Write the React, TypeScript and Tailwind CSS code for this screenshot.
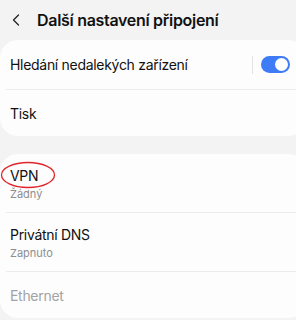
import { ChevronLeft } from "lucide-react";

function Toggle() {
    return (
        <div className="flex items-center gap-2">
            <div className="w-px h-[18px] bg-[#e3e3e3]"></div>
            <div className="w-[29px] h-[17px] rounded-full bg-[#3e7bf6] flex items-center justify-end pr-[2px]">
                <div className="w-[13px] h-[13px] rounded-full bg-white"></div>
            </div>
        </div>
    );
}

export default function App() {
    return (
        <div
            className="w-[296px] h-[320px] overflow-hidden bg-[#f3f3f3] text-[#111]"
            style={{ fontFamily: "Inter, 'Noto Sans', sans-serif" }}
        >
            {/* HEADER */}
            <div className="h-[40px] flex items-center pl-[6px]">
                <ChevronLeft className="w-[20px] h-[20px] text-[#222]" strokeWidth={1.5} />
                <h1 className="ml-[11px] text-[16px] font-semibold tracking-[-0.3px]">
                    Další nastavení připojení
                </h1>
            </div>

            {/* CARD 1 */}
            <div className="bg-[#fdfdfd] rounded-[18px] mr-[-10px]">
                <div className="h-[49px] flex items-center justify-between pl-[10px] pr-[16px]">
                    <span className="text-[14px] tracking-[-0.3px]">Hledání nedalekých zařízení</span>
                    <Toggle />
                </div>
                <div className="ml-[6px] h-px bg-[#ececec]"></div>
                <div className="h-[46px] flex items-center pl-[10px]">
                    <span className="text-[14px] tracking-[-0.3px]">Tisk</span>
                </div>
            </div>

            {/* CARD 2 */}
            <div className="mt-[18px] bg-[#fdfdfd] rounded-[18px] mr-[-10px]">
                <div className="relative h-[58px] flex flex-col justify-center pl-[10px] pt-[2px]">
                    <span className="text-[14px] leading-[20px] tracking-[-0.3px]">VPN</span>
                    <span className="text-[11px] leading-[16px] text-[#8e8e8e]">Žádný</span>
                    <svg className="absolute left-0 top-[7px]" width="56" height="28" viewBox="0 0 56 28">
                        <ellipse cx="28" cy="14" rx="26.5" ry="12.5" fill="none" stroke="#e0262b" strokeWidth="1.3" />
                    </svg>
                </div>
                <div className="ml-[6px] h-px bg-[#ececec]"></div>
                <div className="h-[58px] flex flex-col justify-center pl-[10px] pt-[2px]">
                    <span className="text-[14px] leading-[20px] tracking-[-0.3px]">Privátní DNS</span>
                    <span className="text-[11px] leading-[16px] text-[#8e8e8e]">Zapnuto</span>
                </div>
                <div className="ml-[6px] h-px bg-[#ececec]"></div>
                <div className="h-[46px] flex items-center pl-[10px]">
                    <span className="text-[14px] tracking-[-0.3px] text-[#a3a3a3]">Ethernet</span>
                </div>
            </div>
        </div>
    );
}
